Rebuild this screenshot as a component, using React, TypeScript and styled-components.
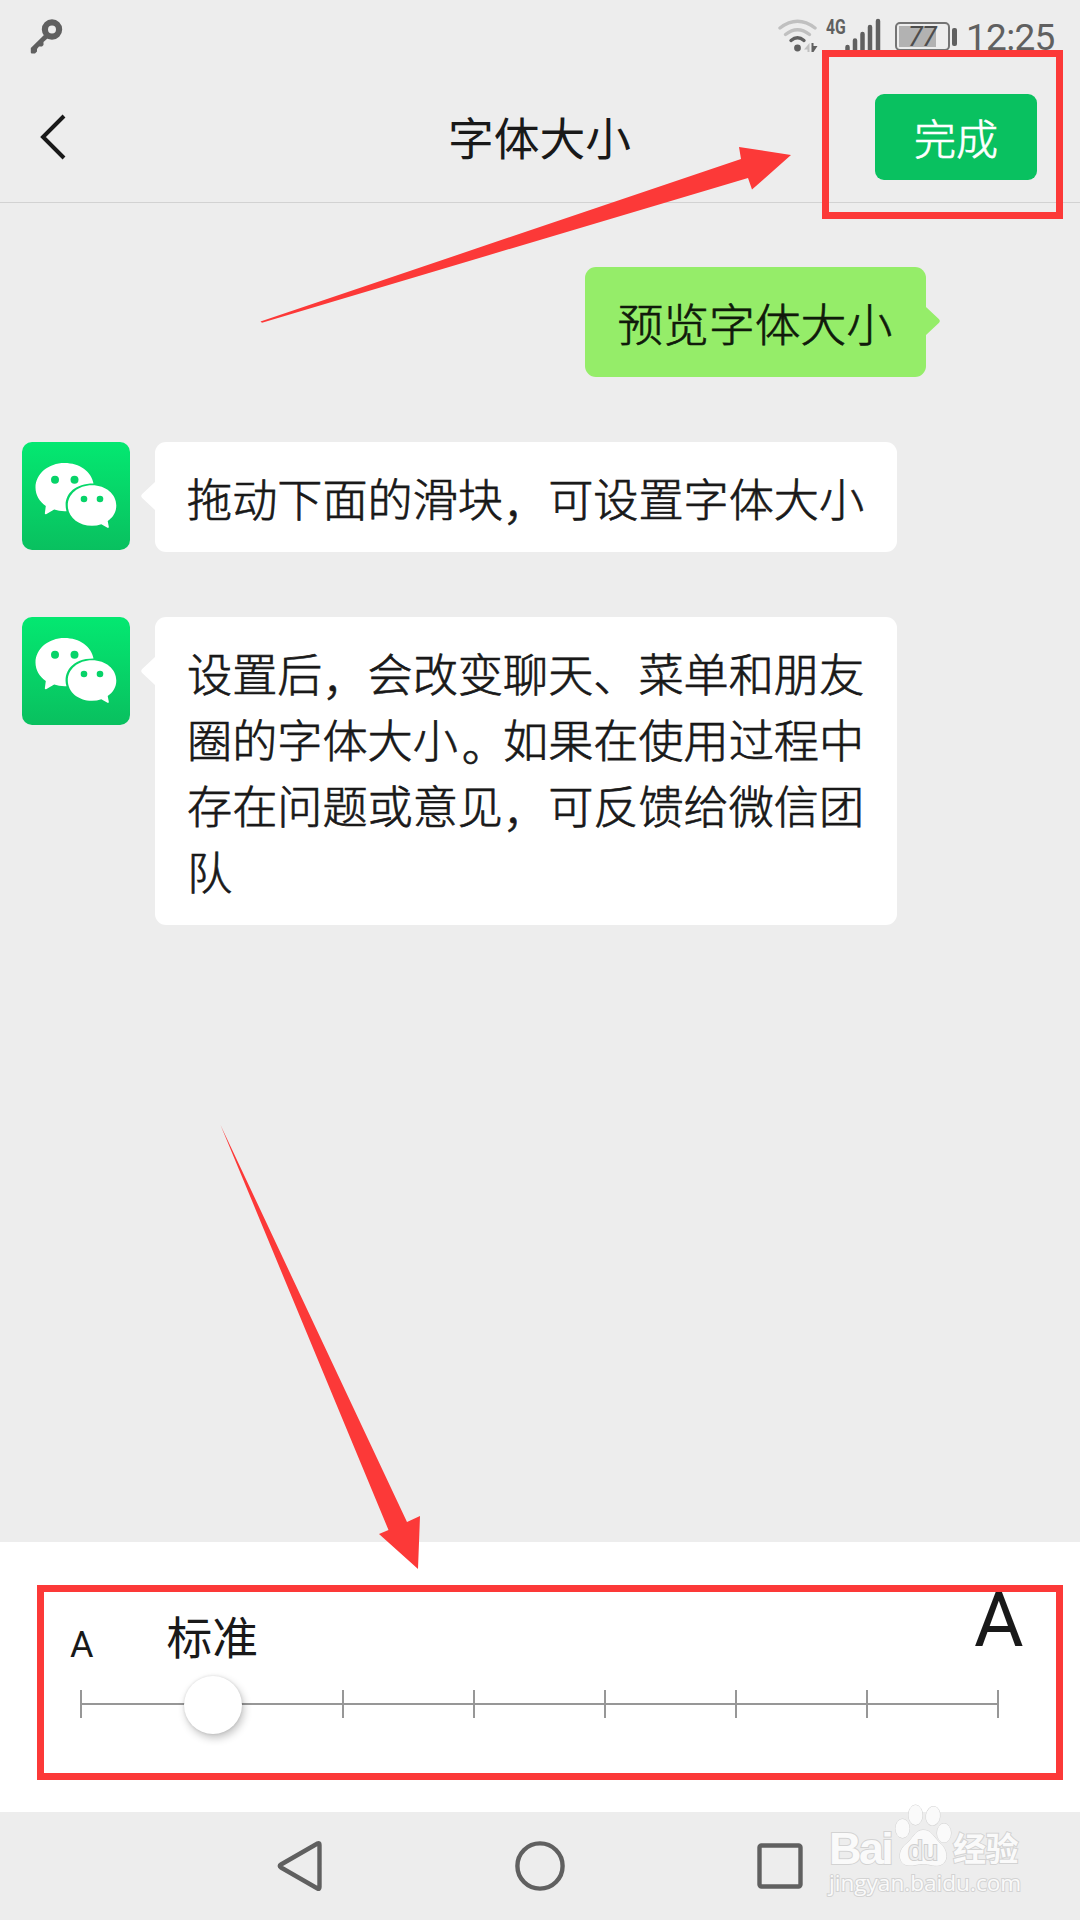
import React from "react";
import styled, { createGlobalStyle, css } from "styled-components";

const RED = "#fc3938";
const INK = "#191919";

const Global = createGlobalStyle`
  *, *::before, *::after { box-sizing: border-box; }
  body { margin: 0; background: #ededed; }
`;

const Screen = styled.main`
  position: relative;
  display: flex;
  flex-direction: column;
  width: 1080px;
  height: 1920px;
  overflow: hidden;
  background: #ededed;
  color: ${INK};
  font-family: Roboto, "Noto Sans CJK SC", sans-serif;
`;

const StatusBar = styled.div`
  display: flex;
  justify-content: space-between;
  height: 72px;
  padding: 0 24px 0 30px;
  color: #606060;
`;

const KeyIcon = styled.svg`
  width: 34px;
  height: 36px;
  margin-top: 18px;
`;

const StatusRight = styled.div`
  display: flex;
  align-items: flex-start;
  height: 52px;
`;

const StatusIcon = styled.svg<{ $w: number }>`
  width: ${(p) => p.$w}px;
  height: 56px;
  flex: none;
`;

const Network = styled.span`
  width: 19px;
  margin: 16px 0 0 8px;
  font: 700 21px/22px Roboto, sans-serif;
  transform: scaleX(0.75);
  transform-origin: left;
`;

const Battery = styled.div`
  display: flex;
  align-items: center;
  gap: 2px;
  margin: 22px 0 0 14px;
`;

const BatteryBody = styled.div`
  width: 55px;
  height: 29px;
  padding: 2px;
  border: 2px solid #747474;
  border-radius: 5px;
`;

const BatteryFill = styled.div`
  display: flex;
  align-items: center;
  justify-content: center;
  width: 37px;
  height: 21px;
  padding: 2px 0 0 9px;
  background: #b2b2b2;
  color: #4d4d4d;
  font: italic 400 27px/21px Roboto, sans-serif;
  letter-spacing: -0.8px;
`;

const BatteryCap = styled.div`
  width: 5px;
  height: 18px;
  border-radius: 2px;
  background: #606060;
`;

const Clock = styled.time`
  width: 90px;
  margin: 18px 0 0 9px;
  font: 400 37px/40px Roboto, sans-serif;
  letter-spacing: -0.7px;
  white-space: nowrap;
`;

const Header = styled.header`
  display: grid;
  grid-template-columns: 1fr auto 1fr;
  align-items: center;
  height: 131px;
  padding: 0 43px 0 40px;
  border-bottom: 1px solid #d2d2d2;
`;

const BackIcon = styled.svg`
  width: 26px;
  height: 48px;
`;

const Title = styled.h1`
  margin: 0;
  padding: 8px 0 0 2px;
  font-size: 45.8px;
  font-weight: 400;
  line-height: 66px;
`;

const DoneButton = styled.button`
  justify-self: end;
  width: 162px;
  height: 86px;
  padding: 0;
  border: 0;
  border-radius: 9px;
  background: #09c160;
  color: #fff;
  font: 300 42px/60px "Noto Sans CJK SC", sans-serif;
  -webkit-text-stroke: 0.7px #fff;
`;

const Chat = styled.section`
  display: flex;
  flex-direction: column;
  gap: 65px;
  flex: 1;
  padding: 64px 22px 0;
`;

const MessageRow = styled.div<{ $mine?: boolean }>`
  display: flex;
  align-items: flex-start;
  gap: 24.6px;
  ${(p) =>
    p.$mine &&
    css`
      justify-content: flex-end;
      padding-right: 132px;
    `}
`;

const Avatar = styled.svg`
  flex: none;
  width: 108px;
  height: 108px;
  border-radius: 10px;
`;

const Bubble = styled.div<{ $mine?: boolean }>`
  position: relative;
  width: ${(p) => (p.$mine ? 341 : 742.4)}px;
  padding: 27px 30px 17px 32.4px;
  border-radius: 11px;
  background: ${(p) => (p.$mine ? "#95ed69" : "#fff")};
  color: ${(p) => (p.$mine ? "#101a0b" : INK)};
  font-size: ${(p) => (p.$mine ? 45.8 : 45.15)}px;
  font-weight: 300;
  -webkit-text-stroke: 0.7px currentColor;
  line-height: 66px;
  white-space: nowrap;
`;

const Mark = styled.span<{ $dx: number }>`
  display: inline-block;
  transform: translate(${(p) => p.$dx}px, 4px);
`;

const Tail = styled.svg<{ $mine?: boolean }>`
  position: absolute;
  top: 38px;
  width: 15px;
  height: 32px;
  ${(p) => (p.$mine ? "right: -14px; transform: scaleX(-1);" : "left: -14px;")}
`;

const SizePanel = styled.section`
  height: 270px;
  padding: 48px 62px 0 67px;
  background: #fff;
`;

const Labels = styled.div`
  display: flex;
  align-items: flex-start;
  height: 94px;
`;

const Label = styled.span<{ $size: number; $top: number; $left?: number; $push?: boolean }>`
  margin-top: ${(p) => p.$top}px;
  margin-left: ${(p) => (p.$push ? "auto" : `${p.$left ?? 0}px`)};
  margin-right: ${(p) => (p.$push ? "-5.5px" : "0")};
  font-size: ${(p) => p.$size}px;
  line-height: 60px;
`;

const Track = styled.div`
  position: relative;
  display: flex;
  justify-content: space-between;
  width: 919px;
  height: 28px;
  margin: 6px 0 0 13px;
  background: linear-gradient(#979797, #979797) 0 13px / 100% 2px no-repeat;
`;

const Tick = styled.i<{ $hidden: boolean }>`
  width: 2px;
  height: 28px;
  background: ${(p) => (p.$hidden ? "transparent" : "#979797")};
`;

const Thumb = styled.div`
  position: absolute;
  left: 104px;
  top: -14px;
  width: 58px;
  height: 58px;
  border-radius: 50%;
  background: #fff;
  box-shadow: 2px 4px 9px rgba(0, 0, 0, 0.24), 0 0 3px rgba(0, 0, 0, 0.12);
`;

const NavBar = styled.nav`
  display: flex;
  align-items: center;
  justify-content: center;
  gap: 184px;
  height: 108px;
`;

const NavIcon = styled.svg`
  width: 56px;
  height: 56px;
`;

const Highlight = styled.div<{ $x: number; $y: number; $w: number; $h: number }>`
  position: absolute;
  left: ${(p) => p.$x}px;
  top: ${(p) => p.$y}px;
  width: ${(p) => p.$w}px;
  height: ${(p) => p.$h}px;
  border: 7px solid ${RED};
`;

const Arrows = styled.svg`
  position: absolute;
  inset: 0;
  width: 1080px;
  height: 1920px;
  pointer-events: none;
`;

const Watermark = styled.div`
  position: absolute;
  left: 829px;
  top: 1804px;
  width: 194px;
  color: #fafafa;
  -webkit-text-stroke: 2px #d3d3d3;
  paint-order: stroke fill;
`;

const Brand = styled.div`
  display: flex;
  align-items: flex-end;
  height: 63px;
`;

const BrandLatin = styled.span`
  width: 66px;
  font: 700 45px/36px "Liberation Sans", sans-serif;
  letter-spacing: -2.6px;
`;

const Paw = styled.svg`
  width: 58px;
  height: 64px;
  flex: none;
`;

const BrandCjk = styled.span`
  font: 700 33px/36px "Noto Sans CJK SC", sans-serif;
  letter-spacing: -0.5px;
  padding-bottom: 2px;
`;

const Site = styled.div`
  margin-top: 1px;
  font: 400 22.6px/30px "Open Sans", "Noto Sans", sans-serif;
  white-space: nowrap;
`;

function WeChatAvatar({ id }: { id: string }) {
  return (
    <Avatar viewBox="0 0 108 108">
      <defs>
        <linearGradient id={id} x1="0" y1="0" x2="0" y2="1">
          <stop offset="0" stopColor="#04e871" />
          <stop offset="1" stopColor="#09c05f" />
        </linearGradient>
      </defs>
      <rect width="108" height="108" fill={`url(#${id})`} />
      <path
        fill="#fff"
        d="M42.5 21C26.500 21 13.500 31.800 13.500 45.500C13.500 53 17.500 59.500 23.800 64L22.800 71.500Q23.200 72.800 24.500 72L32.200 67.500Q37.500 69.500 44.500 69.200C40.500 55 50.500 41.500 71.500 41.600C69.500 29.500 57.500 21 42.500 21Z"
      />
      <path
        fill="#fff"
        d="M70 43.300C56 43.300 45.800 52.300 45.800 63.500C45.800 74.800 56 83.800 70 83.800Q75 83.800 79.300 82.300L85.500 85.800Q87 86.200 86.800 84.800L85.700 79C91.200 75.300 94.300 70 94.300 63.500C94.300 52.300 84 43.300 70 43.300Z"
      />
      <g fill="#06d368">
        <circle cx="33" cy="37.700" r="4" />
        <circle cx="52.500" cy="37.700" r="4" />
        <circle cx="62" cy="57" r="3.300" />
        <circle cx="78" cy="57" r="3.300" />
      </g>
    </Avatar>
  );
}

/* Commas and full stops hang a little lower than the line's characters. */
function Line({ text }: { text: string }) {
  return (
    <div>
      {text.split(/([，。])/).map((part, i) =>
        part === "，" || part === "。" ? (
          <Mark key={i} $dx={part === "。" ? 4 : 0}>
            {part}
          </Mark>
        ) : (
          part
        ),
      )}
    </div>
  );
}

function Message({ id, lines }: { id: string; lines: string[] }) {
  return (
    <MessageRow>
      <WeChatAvatar id={id} />
      <Bubble>
        <Tail viewBox="0 0 15 32">
          <path d="M15 0L14 2L1.200 14Q-.8 16 1.200 18L14 30L15 32Z" fill="#fff" />
        </Tail>
        {lines.map((line) => (
          <Line key={line} text={line} />
        ))}
      </Bubble>
    </MessageRow>
  );
}

export default function App() {
  return (
    <>
      <Global />
      <Screen>
        <StatusBar>
          <KeyIcon viewBox="0 0 34 36">
            <circle cx="22" cy="11.500" r="7.100" fill="none" stroke="#606060" strokeWidth="6.200" />
            <path
              fill="#606060"
              d="M14 17L.8 30V34.500Q.8 35.500 2 35.500H5L7 33.500V31L9 28.500H12L13.500 27V24L18 20Z"
            />
          </KeyIcon>
          <StatusRight>
            <StatusIcon $w={40} viewBox="0 0 40 56">
              <g fill="none" strokeWidth="3.400" strokeLinecap="round">
                <path d="M2 28Q19.500 14.500 37 28" stroke="#c0c0c0" />
                <path d="M7.500 34.500Q19.500 25 31.500 34.500" stroke="#c0c0c0" />
                <path d="M13 40.500Q19.500 35 26 40.500" stroke="#606060" />
              </g>
              <circle cx="19.500" cy="48" r="3.400" fill="#606060" />
              <path d="M31.500 43V52H29.500V49.500H26Z" fill="#c0c0c0" />
              <path d="M33.500 43V52H35.500L39.500 46H35.500V43Z" fill="#606060" />
            </StatusIcon>
            <Network>4G</Network>
            <StatusIcon $w={36} viewBox="0 0 36 56">
              <g stroke="#606060" strokeWidth="4.500" strokeLinecap="round">
                <path d="M2.500 47V54M10 40.500V54M17.500 34V54M25 27V54M33 21V54" />
              </g>
            </StatusIcon>
            <Battery>
              <BatteryBody>
                <BatteryFill>77</BatteryFill>
              </BatteryBody>
              <BatteryCap />
            </Battery>
            <Clock>12:25</Clock>
          </StatusRight>
        </StatusBar>

        <Header>
          <BackIcon viewBox="0 0 26 48">
            <path d="M24 3L3 24L24 45" fill="none" stroke={INK} strokeWidth="4" />
          </BackIcon>
          <Title>字体大小</Title>
          <DoneButton>完成</DoneButton>
        </Header>

        <Chat>
          <MessageRow $mine>
            <Bubble $mine>
              <Tail $mine viewBox="0 0 15 32">
                <path d="M15 0L14 2L1.200 14Q-.8 16 1.200 18L14 30L15 32Z" fill="#95ed69" />
              </Tail>
              预览字体大小
            </Bubble>
          </MessageRow>
          <Message id="avatarA" lines={["拖动下面的滑块，可设置字体大小"]} />
          <Message
            id="avatarB"
            lines={[
              "设置后，会改变聊天、菜单和朋友",
              "圈的字体大小。如果在使用过程中",
              "存在问题或意见，可反馈给微信团",
              "队",
            ]}
          />
        </Chat>

        <SizePanel>
          <Labels>
            <Label $size={36} $top={25} $left={3}>A</Label>
            <Label $size={45.8} $top={20} $left={73}>标准</Label>
            <Label $size={76} $top={0} $push>A</Label>
          </Labels>
          <Track>
            {Array.from({ length: 8 }, (_, i) => (
              <Tick key={i} $hidden={i === 1} />
            ))}
            <Thumb />
          </Track>
        </SizePanel>

        <NavBar>
          <NavIcon viewBox="0 0 56 56" fill="none" stroke="#606060" strokeWidth="4.400">
            <path d="M45.500 5.500Q47.500 4.500 47.500 7V49Q47.500 51.500 45.500 50.500L9 29.500Q6.500 28 9 26.500Z" />
          </NavIcon>
          <NavIcon viewBox="0 0 56 56" fill="none" stroke="#606060" strokeWidth="4.400">
            <circle cx="28" cy="28" r="22.600" />
          </NavIcon>
          <NavIcon viewBox="0 0 56 56" fill="none" stroke="#606060" strokeWidth="4.400">
            <rect x="7.500" y="7.500" width="41" height="41" rx="2" />
          </NavIcon>
        </NavBar>

        <Highlight $x={822} $y={50} $w={241} $h={169} />
        <Highlight $x={37} $y={1585} $w={1026} $h={195} />
        <Arrows viewBox="0 0 1080 1920" fill={RED}>
          <path d="M260.500 321.500L741 159L739 147L791 155L752 189.500L748 178L262 322.700Z" />
          <path d="M220.500 1125L407 1522L420 1516L418 1569L379 1534L388.500 1530Z" />
        </Arrows>

        <Watermark>
          <Brand>
            <BrandLatin>Bai</BrandLatin>
            <Paw viewBox="0 0 58 64" fill="#fafafa" stroke="#d3d3d3" strokeWidth="1">
              <ellipse cx="7.500" cy="25.500" rx="7" ry="9.500" />
              <ellipse cx="20.500" cy="12" rx="7" ry="10" />
              <ellipse cx="38" cy="13" rx="7" ry="9.500" transform="rotate(8 38 13)" />
              <ellipse cx="49" cy="30" rx="7" ry="9.500" />
              <path d="M28 27C20 27 18 36 11 41C2 48 3 62 14 62.500C20 63 22 61 28 61C34 61 38 63.500 44 62.500C54 60 53 48 46 41C39 35 37 27 28 27Z" />
              <text
                x="28"
                y="57"
                textAnchor="middle"
                fontFamily="Liberation Sans, sans-serif"
                fontSize="27"
                fill="#ededed"
                stroke="#cfcfcf"
                strokeWidth="2"
              >
                du
              </text>
            </Paw>
            <BrandCjk>经验</BrandCjk>
          </Brand>
          <Site>jingyan.baidu.com</Site>
        </Watermark>
      </Screen>
    </>
  );
}
